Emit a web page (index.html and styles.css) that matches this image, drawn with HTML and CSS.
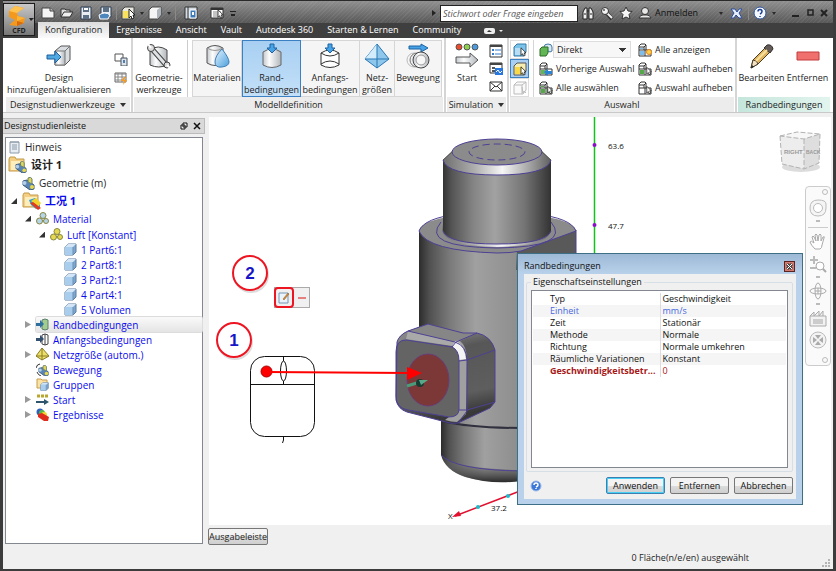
FILE: index.html
```
<!DOCTYPE html>
<html lang="de">

<head>
    <meta charset="UTF-8">
    <meta name="viewport" content="width=device-width, initial-scale=1.0">
    <title>CFD - Randbedingungen</title>
    <link rel="stylesheet" href="styles.css">
</head>

<body>
    <!-- shared icon shapes -->
    <svg class="sprite" width="0" height="0" aria-hidden="true">
        <defs>
            <linearGradient id="metal" x1="0" x2="1">
                <stop offset="0" stop-color="#c4c8cc" />
                <stop offset=".35" stop-color="#fdfdfd" />
                <stop offset="1" stop-color="#b2b7bc" />
            </linearGradient>
            <linearGradient id="sky" x1="0" x2="1" y2="1">
                <stop offset="0" stop-color="#e8f6ff" />
                <stop offset="1" stop-color="#4a9fdc" />
            </linearGradient>
        </defs>
        <symbol id="cube" viewBox="0 0 13 13">
            <path d="M1 4 4 1h8v8l-3 3H1z" fill="#7da7d2" stroke="#5c7d9f" />
            <path d="M1 4h8v8H1z" fill="#a9cdec" />
            <path d="M1 4 4 1h8L9 4z" fill="#d4e6f5" />
            <path d="M9 4v8" stroke="#6c8fb2" />
        </symbol>
        <symbol id="cursor" viewBox="0 0 8 12">
            <path d="M1 1v9l2-2 1 3 2-1-1-3h2z" fill="#fff" stroke="#222" />
        </symbol>
        <symbol id="stack" viewBox="0 0 14 14">
            <path d="M1 7V3l2-2h4l1 1v5" fill="#fff" stroke="#333" />
            <path d="M1 7h12v6H1zM7 7v6M1 4h5l2-2M6 4v3" fill="#fff" stroke="#333" />
        </symbol>
        <symbol id="balls" viewBox="0 0 13 13">
            <path d="M4 8 7 4l3 5z" stroke="#777" fill="none" />
            <circle cx="7" cy="3.500" r="3" stroke="#8a8640" />
            <circle cx="3.500" cy="9" r="3" stroke="#8a8640" />
            <circle cx="10" cy="9" r="2.500" stroke="#8a8640" />
        </symbol>
        <symbol id="folder" viewBox="0 0 20 18">
            <path d="M1 15V3l1-2h5l1 2h8v12z" fill="#f5cf83" stroke="#c39a4a" />
            <path d="M3 5h12v9H3z" fill="#fdeebd" />
        </symbol>
        <symbol id="pipe" viewBox="0 0 13 13">
            <path d="m1 4 4-1 7 5v4l-4 1-7-5z" fill="#5b86b4" stroke="#38587a" />
            <path d="M6 1q3-2 4 1v5L6 5z" fill="#e0d75a" stroke="#67806e" />
            <circle cx="2.500" cy="6" r="2" fill="#b3cfe8" />
            <circle cx="10" cy="10" r="2" fill="#e8d94b" />
        </symbol>
    </svg>

    <div class="window">
        <header class="header">
            <button class="app-button" aria-label="CFD Menü">
                <svg width="30" height="22" viewBox="0 0 30 22">
                    <path d="m5 6 6-5 9 2-7 5 1 3 7 2-1 5-7 3-8-1 6-5-6-3z" fill="#f39a1e" />
                    <path d="m11 1 9 2-7 5-8-2z" fill="#ffc352" />
                    <path d="m13 11 8 2-8 3z" fill="#ffb436" />
                    <path d="m13 16 7 2-7 3z" fill="#d86b0f" />
                    <path d="M25 13h5l-3 3z" fill="#222" />
                </svg>
                <span>CFD</span>
            </button>

            <div class="titlebar">
                <div class="quick">
                    <button aria-label="Neu"><svg width="14" height="12"><path d="M1 1h8l4 3v7H1z" fill="#f4f4f4" stroke="#444" /><path d="M9 1v3h4" fill="#bbb" stroke="#444" /></svg></button>
                    <button aria-label="Öffnen"><svg width="14" height="12"><path d="M1 10V2h4l1 1h4v2" fill="#ddd" stroke="#333" /><path d="M1 10 4 5h9l-3 5z" fill="#eee" stroke="#333" /></svg></button>
                    <button aria-label="Speichern"><svg width="14" height="14"><path d="M2 1h10v12H2z" fill="#e8edf2" stroke="#2e3c4e" /><path d="M4 1h6v5H4zM4 9h6v4H4z" fill="#5c7085" /><path d="M5 2h4v2H5z" fill="#fff" /></svg></button>
                    <button aria-label="Speichern unter"><svg width="14" height="14"><path d="M3 1h10v10H3z" fill="#e8edf2" stroke="#2e3c4e" /><path d="M5 1h6v5H5z" fill="#5c7085" /><path d="M1 9q6-4 11 0l-2 4H2z" fill="#4c86bd" stroke="#fff" /></svg></button>
                    <i class="split"></i>
                    <button class="with-arrow" aria-label="Auswahl"><svg width="14" height="14"><path d="M1 4 4 1h9v8l-3 4H1z" fill="#e9e9df" stroke="#444" /><path d="M2 5h6v7H2z" fill="#fbe25b" /><use href="#cursor" x="7" y="2" width="8" height="12" /></svg></button>
                    <button class="with-arrow" aria-label="Darstellung"><svg width="14" height="14"><path d="M1 4 4 1h9v8l-3 4H1z" fill="#f5f5f5" stroke="#444" /><path d="M9 4v9l4-4V1z" fill="#aeb4ba" /></svg></button>
                    <i class="split"></i>
                    <button class="wide" aria-label="Designstudienleiste"><svg width="14" height="14"><path d="M1 1h12v12H1z" fill="#d5dce3" stroke="#333" /><path d="M4 1v12" stroke="#333" /><path d="M6 4h6v8H6z" fill="#3d7bb8" stroke="#fff" /><path d="M8 6h2v3H8z" fill="#fff" /></svg></button>
                    <button class="wide" aria-label="Tabelle"><svg width="14" height="14"><path d="M1 2h12v10H1z" fill="#fff" stroke="#333" /><path d="M1 3h12" stroke="#333" stroke-width="2" /><path d="M3 6h8M3 8h8M3 10h8" stroke="#888" /><use href="#cursor" x="7" y="3" width="7" height="10" /></svg></button>
                    <i class="more"></i>
                </div>

                <div class="search">
                    <i class="play"></i>
                    <input type="text" placeholder="Stichwort oder Frage eingeben" aria-label="Suche">
                </div>

                <div class="account">
                    <button aria-label="Suchen"><svg width="14" height="14"><path d="M2 13V6l2-4h2v11zM8 13V2h2l2 4v7zM6 5h2" fill="#eee" stroke="#222" /><path d="M3 8h2M9 8h2" stroke="#222" /></svg></button>
                    <button aria-label="Schlüssel"><svg width="14" height="14"><path d="m6 6 6 7" stroke="#333" stroke-width="4" /><path d="m6 6 6 6" stroke="#f3f3f3" stroke-width="2" /><circle cx="5" cy="5" r="3.500" fill="#f3f3f3" stroke="#333" /><circle cx="4" cy="4" r="1" fill="#555" /></svg></button>
                    <button aria-label="Favoriten"><svg width="14" height="14"><path d="m7 1 2 4 4 .5-3 3 1 4.500L7 11l-4 2 1-4.500-3-3L5 5z" fill="#f5f5f5" stroke="#333" /></svg></button>
                    <button class="signin"><svg width="14" height="14"><circle cx="7" cy="5" r="3.500" fill="#e8e8e8" stroke="#333" /><path d="M1 12q1-3 4-3h4q3 0 4 3z" fill="#e8e8e8" stroke="#333" /></svg>Anmelden</button>
                    <button class="exchange" aria-label="Exchange"><svg width="13" height="13"><path d="M1 2h4l2 3 2-3h3L9 6l3 5H9L6 8l-2 3H1l3-5z" fill="#e7eefb" stroke="#2c4f9c" /></svg></button>
                    <i class="split"></i>
                    <button class="with-arrow" aria-label="Hilfe"><svg width="14" height="14"><circle cx="7" cy="7" r="6" fill="#f4f7fd" stroke="#2f549e" /><path d="M5 5.500Q5 3.500 7 3.500t2 2Q9 7 7 8M7 10v1" fill="none" stroke="#1c3f94" stroke-width="1.500" /></svg></button>
                </div>

                <div class="controls">
                    <button aria-label="Minimieren"><svg width="10" height="10"><path d="M1 8h7" stroke="#222" stroke-width="2" /></svg></button>
                    <button aria-label="Maximieren"><svg width="10" height="10"><path d="M3 2h5v5H3z" fill="none" stroke="#222" stroke-width="1.500" /></svg></button>
                    <button aria-label="Schließen"><svg width="10" height="10"><path d="m2 2 6 6M8 2 2 8" stroke="#222" stroke-width="2" /></svg></button>
                </div>
            </div>

            <nav class="tabs">
                <a href="#" class="active">Konfiguration</a>
                <a href="#">Ergebnisse</a>
                <a href="#">Ansicht</a>
                <a href="#">Vault</a>
                <a href="#">Autodesk 360</a>
                <a href="#">Starten &amp; Lernen</a>
                <a href="#">Community</a>
                <button class="collapse" aria-label="Multifunktionsleiste"><svg width="20" height="8"><rect x="1" y="1" width="11" height="6" rx="2" fill="#eee" /><path d="m4 5 2-2 3 2z" fill="#333" /><path d="M16 3h4l-2 2z" fill="#eee" /></svg></button>
            </nav>
        </header>

        <div class="ribbon">
            <section class="group group-design">
                <div class="tools">
                    <button class="tool tool-design">
                        <svg width="26" height="26" viewBox="0 0 26 26"><path d="m9 8 6-5h9v14l-5 5H9z" fill="#d9dde1" stroke="#555" /><path d="M9 8h10v14H9z" fill="url(#metal)" stroke="#777" /><path d="m19 8 5-5" stroke="#777" /><path d="M1 12h8V8l6 6-6 6v-4H1z" fill="#4fa8e0" stroke="#1d5f9e" /></svg>
                        <span>Design<br>hinzufügen/aktualisieren</span>
                    </button>
                    <div class="small-tools">
                        <button aria-label="Teil"><svg width="14" height="14"><path d="M1 2h8v7H1z" fill="#fff" stroke="#555" /><path d="M7 6h6v8H7z" fill="#dce3ea" stroke="#46535f" /><path d="M9 8h2v3H9z" fill="#4e7faf" /></svg></button>
                        <button aria-label="Tabelle"><svg width="14" height="14"><path d="M1 2h11v9H1z" fill="#fff" stroke="#666" /><path d="M1 3h11M1 6h11M1 9h11M4 2v9M8 2v9" stroke="#888" /><path d="m10 6-3 4h3l-1 4 4-5h-3l2-3z" fill="#f49c23" /></svg></button>
                    </div>
                </div>
                <div class="caption">Designstudienwerkzeuge <i class="arrow"></i></div>
            </section>

            <section class="group group-model">
                <div class="tools">
                    <button class="tool tool-geometry">
                        <svg width="26" height="26" viewBox="0 0 26 26"><path d="M4 7q8-6 17 0v15q-8 4-17 0z" fill="url(#metal)" stroke="#444" /><path d="m6 6 14 16" stroke="#444" stroke-width="5" /><path d="m6 6 14 16" stroke="#dfe2e5" stroke-width="3" /><circle cx="5" cy="5" r="3.500" fill="#ddd" stroke="#444" /><circle cx="21" cy="22" r="3" fill="#ddd" stroke="#444" /><path d="m2 1 3 4M24 25l-3-3" stroke="#fff" stroke-width="2" /></svg>
                        <span>Geometrie-<br>werkzeuge</span>
                    </button>
                    <div class="gallery">
                        <button class="tool tool-material">
                            <svg width="26" height="26" viewBox="0 0 26 26"><path d="M3 5q8-5 16 0v15q-8 5-16 0z" fill="url(#metal)" stroke="#555" /><path d="M3 5q8 5 16 0" fill="none" stroke="#999" /><path d="M18 6q7 9 7 13t-7 5-7-5 7-13z" fill="url(#sky)" stroke="#3f7fb8" /></svg>
                            <span>Materialien</span>
                        </button>
                        <button class="tool tool-boundary selected">
                            <svg width="26" height="26" viewBox="0 0 26 26"><path d="M4 9q9-6 18 0v13q-9 5-18 0z" fill="url(#metal)" stroke="#666" /><path d="M11 1h4v4h3l-5 5-5-5h3z" fill="#47a3e5" stroke="#1c62a5" /></svg>
                            <span>Rand-<br>bedingungen</span>
                        </button>
                        <button class="tool tool-initial">
                            <svg width="26" height="26" viewBox="0 0 26 26"><path d="M4 10q9-6 18 0v12q-9 5-18 0z" fill="#fff" stroke="#333" /><path d="M4 10q9 6 18 0M4 21q9-6 18 0" fill="none" stroke="#333" /><path d="M11 1h4v4h3l-5 5-5-5h3z" fill="#47a3e5" stroke="#1c62a5" /></svg>
                            <span>Anfangs-<br>bedingungen</span>
                        </button>
                        <button class="tool tool-mesh">
                            <svg width="26" height="26" viewBox="0 0 26 26"><path d="M13 1 25 16l-12 9L1 16z" fill="#8ec6ec" stroke="#2977b4" /><path d="M13 1 1 16h12z" fill="#d3ecfb" /><path d="M13 1v24M1 16h24" stroke="#2977b4" /></svg>
                            <span>Netz-<br>größen</span>
                        </button>
                        <button class="tool tool-motion">
                            <svg width="26" height="26" viewBox="0 0 26 26"><path d="M4 3h12V1l7 4-7 4V6H4z" fill="#47a3e5" stroke="#1c62a5" /><circle cx="9" cy="17" r="7" fill="none" stroke="#bbb" /><circle cx="12" cy="17" r="7" fill="#eee" stroke="#777" /><circle cx="16" cy="17" r="8" fill="url(#metal)" stroke="#444" /><circle cx="16" cy="17" r="5" fill="#f7f7f7" stroke="#999" /></svg>
                            <span>Bewegung</span>
                        </button>
                    </div>
                </div>
                <div class="caption">Modelldefinition</div>
            </section>

            <section class="group group-simulation">
                <div class="tools">
                    <button class="tool tool-start">
                        <svg width="26" height="26" viewBox="0 0 26 26"><circle cx="5" cy="4" r="3" fill="#ef4b2b" stroke="#555" /><circle cx="13" cy="4" r="3" fill="#8fd14a" stroke="#555" /><circle cx="21" cy="4" r="3" fill="#4a9ae0" stroke="#555" /><path d="M2 14h14v-4l8 7-8 7v-4H2z" fill="url(#metal)" stroke="#555" /></svg>
                        <span>Start</span>
                    </button>
                    <div class="small-tools">
                        <button aria-label="Optionen"><svg width="14" height="14"><path d="M1 1h12v12H1z" fill="#fff" stroke="#333" /><path d="M1 2h12" stroke="#444" stroke-width="2" /><path d="M3 6h2M3 10h2" stroke="#2e7bd0" stroke-width="2" /><path d="M6 6h6M6 10h6" stroke="#2e7bd0" /></svg></button>
                        <button aria-label="Monitor"><svg width="14" height="14"><path d="M1 1h12v10H1z" fill="#fff" stroke="#333" /><path d="M1 2h12" stroke="#444" stroke-width="2" /><path d="M3 6h3M3 9h3" stroke="#555" stroke-width="2" /><path d="M6 6h8v7H6z" fill="#2777e0" /><path d="m7 10 2-2 2 3 2-2" fill="none" stroke="#fff" /></svg></button>
                        <button aria-label="Nachricht"><svg width="14" height="14"><path d="M1 3h12v9H1z" fill="#fff" stroke="#333" /><path d="m1 3 6 5 6-5M1 12l5-5M13 12 8 7" fill="none" stroke="#333" /></svg></button>
                    </div>
                </div>
                <div class="caption">Simulation <i class="arrow"></i></div>
            </section>

            <section class="group group-select">
                <div class="tools">
                    <div class="modes">
                        <button aria-label="Volumen"><svg width="14" height="14"><path d="M1 4 4 1h9v8l-3 4H1z" fill="#7cc3ea" stroke="#337aa8" /><path d="M2 5h7v7H2z" fill="#b7def4" /><use href="#cursor" x="7" y="4" width="7" height="10" /></svg></button>
                        <button class="on" aria-label="Fläche"><svg width="14" height="14"><path d="M1 4 4 1h9v8l-3 4H1z" fill="#f6edb0" stroke="#555" /><path d="M2 5h7v7H2z" fill="#f9da46" /><use href="#cursor" x="7" y="4" width="7" height="10" /></svg></button>
                        <button disabled aria-label="Kante"><svg width="14" height="14"><path d="M1 4 4 1h9v8l-3 4H1zM1 4h8v9M9 4l4-3" fill="#fafafa" stroke="#bbb" /><path d="m9 6 1 6 1-2 2 2" fill="none" stroke="#bbb" /></svg></button>
                    </div>
                    <div class="choices">
                        <div class="choice">
                            <svg width="14" height="14"><path d="M5 4q0-3 4-3t4 3v4q-2 2-4 0H5z" fill="#d9e8f5" stroke="#4377a0" /><path d="M1 6 3 4h6v6l-2 3H1z" fill="#62b655" stroke="#2c6c28" /></svg>
                            <select aria-label="Auswahlmodus">
                                <option>Direkt</option>
                            </select>
                        </div>
                        <button class="choice"><svg width="14" height="14"><use href="#stack" width="14" height="14" /><path d="M2 8h4v4H2z" fill="#62b655" /><path d="m5 10 4-3v2h4v3H9v2z" fill="#2b83d3" /></svg>Vorherige Auswahl</button>
                        <button class="choice"><svg width="14" height="14"><use href="#stack" width="14" height="14" /><path d="M2 8h4v4H2zM2 5h3v1H2zM8 8h4v4H8z" fill="#55a84a" /><use href="#cursor" x="8" y="4" width="6" height="10" /></svg>Alle auswählen</button>
                    </div>
                    <div class="choices">
                        <button class="choice"><svg width="14" height="14"><use href="#stack" width="14" height="14" /><path d="M2 5h3v1H2zM2 8h4v4H2z" fill="#7fbdeb" /><circle cx="11" cy="9" r="2.500" fill="#ffd24a" stroke="#e3861c" /></svg>Alle anzeigen</button>
                        <button class="choice"><svg width="14" height="14"><use href="#stack" width="14" height="14" /><path d="M2 8h4v4H2z" fill="#55a84a" /><use href="#cursor" x="8" y="4" width="6" height="10" /></svg>Auswahl aufheben</button>
                        <button class="choice"><svg width="14" height="14"><use href="#stack" width="14" height="14" /><use href="#cursor" x="8" y="4" width="6" height="10" /></svg>Auswahl aufheben</button>
                    </div>
                </div>
                <div class="caption">Auswahl</div>
            </section>

            <section class="group group-context">
                <div class="tools">
                    <button class="tool tool-edit">
                        <svg width="26" height="26" viewBox="0 0 26 26"><path d="m2 25 2-8L18 3l5 4L9 21z" fill="#e2b45c" stroke="#4a3c28" /><path d="M4 17q4 0 5 4l-7 4z" fill="#f4e3c3" stroke="#4a3c28" /><path d="m15 5 3-3q5-1 6 4l-3 4z" fill="#655b58" stroke="#333" /><path d="m2 25 1-3 2 2z" fill="#222" /><path d="m7 18 11-11" stroke="#f7dfa0" stroke-width="2" /></svg>
                        <span>Bearbeiten</span>
                    </button>
                    <button class="tool tool-remove">
                        <svg width="26" height="26" viewBox="0 0 26 26"><path d="M2 9h22v8H2z" fill="#f0706e" stroke="#c43c3c" /></svg>
                        <span>Entfernen</span>
                    </button>
                </div>
                <div class="caption">Randbedingungen</div>
            </section>
        </div>

        <main class="main">
            <aside class="sidebar">
                <div class="dock-title">
                    <span>Designstudienleiste</span>
                    <button aria-label="Lösen"><svg width="8" height="8"><path d="M3 1h4v4H3zM1 3h4v4H1z" fill="#f0f0f0" stroke="#111" /></svg></button>
                    <button aria-label="Schließen"><svg width="8" height="8"><path d="m1 1 6 6M7 1 1 7" stroke="#111" stroke-width="1.500" /></svg></button>
                </div>
                <ul class="tree">
                    <li>
                        <div class="node tall dark"><svg width="13" height="14"><path d="M2 2h9v11H2z" fill="#e7edf3" stroke="#8c9aa8" /><path d="M2 2h9M4 5h5M4 7h5M4 9h5" stroke="#8c9aa8" /></svg>Hinweis</div>
                    </li>
                    <li>
                        <div class="node tall cjk dark"><svg width="20" height="18"><use href="#folder" width="20" height="18" /><use href="#pipe" x="7" y="5" width="12" height="12" /></svg>设计 1</div>
                        <ul>
                            <li>
                                <div class="node tall dark"><svg width="13" height="13"><use href="#pipe" width="13" height="13" /></svg>Geometrie (m)</div>
                            </li>
                            <li>
                                <div class="node tall cjk"><button class="twisty open" aria-label="Zuklappen"></button><svg width="20" height="18"><use href="#folder" width="20" height="18" /><path d="m7 8 6-2 5 5v4l-4 2-5-4z" fill="#2f9fd6" /><path d="m9 9 5-3 5 5-3 4z" fill="#f2d32d" /><path d="m8 11 3-1 8 6-3 2z" fill="#e03a22" /></svg>工况 1</div>
                                <ul>
                                    <li>
                                        <div class="node medium"><button class="twisty open" aria-label="Zuklappen"></button><svg class="balls-blue" width="13" height="13"><use href="#balls" width="13" height="13" /></svg>Material</div>
                                        <ul>
                                            <li>
                                                <div class="node"><button class="twisty open" aria-label="Zuklappen"></button><svg class="balls-yellow" width="13" height="13"><use href="#balls" width="13" height="13" /></svg>Luft [Konstant]</div>
                                                <ul>
                                                    <li><div class="node"><svg width="13" height="13"><use href="#cube" width="13" height="13" /></svg>1 Part6:1</div></li>
                                                    <li><div class="node"><svg width="13" height="13"><use href="#cube" width="13" height="13" /></svg>2 Part8:1</div></li>
                                                    <li><div class="node"><svg width="13" height="13"><use href="#cube" width="13" height="13" /></svg>3 Part2:1</div></li>
                                                    <li><div class="node"><svg width="13" height="13"><use href="#cube" width="13" height="13" /></svg>4 Part4:1</div></li>
                                                    <li><div class="node"><svg width="13" height="13"><use href="#cube" width="13" height="13" /></svg>5 Volumen</div></li>
                                                </ul>
                                            </li>
                                        </ul>
                                    </li>
                                    <li>
                                        <div class="node current"><button class="twisty" aria-label="Aufklappen"></button><svg width="13" height="13"><path d="M6 2q3-2 6 0v9q-3 2-6 0z" fill="#a3cd8f" stroke="#5c7f6e" /><path d="M0 5h4V2l4 4-4 4V8H0z" fill="#2f6f9e" /></svg>Randbedingungen</div>
                                    </li>
                                    <li>
                                        <div class="node"><svg width="13" height="13"><path d="M6 2q3-2 6 0v9q-3 2-6 0zM9 1v11" fill="#fff" stroke="#444" /><path d="M0 5h4V2l4 4-4 4V8H0z" fill="#34506e" /></svg>Anfangsbedingungen</div>
                                    </li>
                                    <li>
                                        <div class="node"><button class="twisty" aria-label="Aufklappen"></button><svg width="13" height="13"><path d="m6 0 7 8-7 4-6-4z" fill="#ece06a" stroke="#8a7c22" /><path d="M6 0v12M0 8h13" stroke="#8a7c22" /></svg>Netzgröße (autom.)</div>
                                    </li>
                                    <li>
                                        <div class="node"><svg width="13" height="13"><use href="#pipe" x="2" y="2" width="11" height="11" /><path d="M0 5q1-4 4-4M1 9q1 3 4 4" fill="none" stroke="#333" /></svg>Bewegung</div>
                                    </li>
                                    <li>
                                        <div class="node"><svg width="13" height="13"><path d="M1 10V1h4l1 1h5v8z" fill="#fae3a1" stroke="#c89c50" /><use href="#cube" x="4" y="4" width="9" height="9" /></svg>Gruppen</div>
                                    </li>
                                    <li>
                                        <div class="node"><button class="twisty" aria-label="Aufklappen"></button><svg width="13" height="13"><path d="M1 3h3M5 3h3M9 3h3" stroke="#b9a62c" stroke-width="3" /><path d="M0 8h8V6l5 3-5 3v-2H0z" fill="#2d566e" /></svg>Start</div>
                                    </li>
                                    <li>
                                        <div class="node"><button class="twisty" aria-label="Aufklappen"></button><svg width="13" height="13"><circle cx="4" cy="4" r="3.500" fill="#2d62c4" /><circle cx="6" cy="5" r="3" fill="#5cb546" /><circle cx="8" cy="7" r="3" fill="#f0d72b" /><path d="m2 6 4-1 7 4-1 4-4 0-6-4z" fill="#df2d1d" /></svg>Ergebnisse</div>
                                    </li>
                                </ul>
                            </li>
                        </ul>
                    </li>
                </ul>
            </aside>

            <div class="workspace">
                <div class="viewport">
                    <svg class="scene" viewBox="209 117 622 408" preserveAspectRatio="xMinYMin meet">
                        <defs>
                            <linearGradient id="shaft" x1="0" x2="1">
                                <stop offset="0" stop-color="#333" />
                                <stop offset=".08" stop-color="#545454" />
                                <stop offset=".28" stop-color="#848484" />
                                <stop offset=".48" stop-color="#a2a2a2" />
                                <stop offset=".75" stop-color="#757575" />
                                <stop offset="1" stop-color="#333" />
                            </linearGradient>
                            <linearGradient id="body" x1="0" x2="1">
                                <stop offset="0" stop-color="#2c2c2c" />
                                <stop offset=".1" stop-color="#505050" />
                                <stop offset=".3" stop-color="#7a7a7a" />
                                <stop offset=".55" stop-color="#a0a0a0" />
                                <stop offset="1" stop-color="#8c8c8c" />
                            </linearGradient>
                            <linearGradient id="bevel" x1="0" x2="1">
                                <stop offset="0" stop-color="#6e6e6e" />
                                <stop offset=".3" stop-color="#b0b0b0" />
                                <stop offset=".55" stop-color="#f6f6f6" />
                                <stop offset=".8" stop-color="#a4a4a4" />
                                <stop offset="1" stop-color="#606060" />
                            </linearGradient>
                            <linearGradient id="side" x1="0" y1="0" x2=".2" y2="1">
                                <stop offset="0" stop-color="#9a9a9a" />
                                <stop offset=".2" stop-color="#7a7a7a" />
                                <stop offset=".35" stop-color="#575757" />
                                <stop offset=".8" stop-color="#5e5e5e" />
                                <stop offset="1" stop-color="#383838" />
                            </linearGradient>
                            <linearGradient id="foot" x1="0" x2="0" y1="0" y2="1">
                                <stop offset="0" stop-color="#8a8a8a" stop-opacity="0" />
                                <stop offset="1" stop-color="#282828" />
                            </linearGradient>
                        </defs>

                        <!-- lower stub -->
                        <path d="M441 415v40q4 15 24 22 25 7 55 4v-66z" fill="url(#body)" />
                        <path d="M441 455q14 14 80 15v11q-30 4-55-4-21-7-25-22z" fill="url(#foot)" />
                        <path class="edge" d="M441 455q14 15 80 16" />

                        <!-- housing -->
                        <path d="M419 231v165l23 25q20 7 55 7h25V250z" fill="url(#body)" />
                        <path d="M517 250 576 230v40h-60z" fill="#595959" />
                        <path d="M419 231q3-16 78-18 76 2 79 18l-55 20q-10 2-24 2-70-2-78-22z" fill="#8b8b8b" />
                        <path class="edge" d="M419 231q5-13 40-17M535 214q36 4 41 17l-55 20q-10 2-24 2-70-2-78-22M576 230v28" />
                        <path d="M442 230q2 16 55 17 53-1 54-17l-4-6H443z" fill="url(#bevel)" />
                        <path class="edge" d="M441 222q-21 25 56 26 75-1 54-26" />
                        <path d="M442 421q28 7 80 7" fill="none" stroke="#30303e" stroke-width="2" />

                        <!-- shaft -->
                        <path d="M443 160v71q5 13 54 13t54-13v-71z" fill="url(#shaft)" />
                        <path class="edge" d="M443 231q5 13 54 13t54-13" />
                        <path d="m452 151-9 9q4 15 54 15t54-15l-9-9z" fill="url(#bevel)" />
                        <path class="edge" d="M443 160q4 15 54 15t54-15" />
                        <ellipse cx="497" cy="152" rx="45" ry="13" fill="#8b8b8b" />
                        <ellipse class="edge" cx="497" cy="152" rx="45" ry="13" />
                        <path d="m452 152-9 8M542 152l9 8" stroke="#555" />
                        <ellipse class="edge dashed" cx="497" cy="152" rx="28" ry="8" />

                        <!-- side port -->
                        <path d="M397 342q2-7 11-11l20-7 35 9h14q14 3 18 17v52l-5 6-32 15q-8 1-12-1l-39-10q-9-3-11-12z" fill="url(#side)" />
                        <path d="M397 342q2-7 11-11l20-7 35 9h14L452 345l-47-7z" fill="#868686" />
                        <path d="m452 342 7-2q8 6 8 20l-1 54-9 8q-6 0-12-2l13-10z" fill="#a0a0a0" />
                        <path d="m452 344 4-3q8 4 10 18l-7 1z" fill="#f4f4f4" />
                        <path d="m408 331 47 11-3 4-46-7z" fill="#a9a9a9" />
                        <path d="M396 352q0-12 10-12l46 7q7 3 7 14v48q0 8-10 8l-41-7q-12-2-12-14z" fill="#646464" />
                        <path class="edge" d="M397 342q2-7 11-11l20-7 35 9h14q14 3 18 17v52l-5 6-32 15q-8 1-12-1l-39-10q-9-3-11-12z" />
                        <path class="edge" d="M396 352q0-12 10-12l46 7q7 3 7 14v48q0 8-10 8l-41-7q-12-2-12-14zM408 331l47 11q12 4 12 19v50l-9 12M459 361l8-1 28-10M467 410l28-8M452 347l4-5 21-9M459 410h8" />
                        <ellipse cx="428" cy="380" rx="21" ry="26" fill="#7c3737" stroke="#693d78" />
                        <path d="m407 386 13-4" stroke="#4b9b7b" stroke-width="3" />
                        <circle cx="420" cy="383" r="4" fill="#173c31" />
                        <path d="m419 380 9 0-7 5z" fill="#57a98a" />

                        <!-- axes -->
                        <path d="M594.500 117v140" stroke="#12c21b" stroke-width="1.500" />
                        <circle cx="594.500" cy="145" r="2" fill="#8a10c8" />
                        <circle cx="594.500" cy="225" r="2" fill="#8a10c8" />
                        <text class="axis" x="608" y="149">63.6</text>
                        <text class="axis" x="608" y="229">47.7</text>
                        <path d="m520 491-65 25" stroke="#e0102e" stroke-width="1.500" />
                        <path d="m452 517 7-6 2 5z" fill="#e0102e" />
                        <circle cx="508" cy="496" r="2" fill="#19bccb" />
                        <circle cx="478" cy="507" r="2" fill="#19bccb" />
                        <text class="axis" x="491" y="511">37.2</text>
                        <text class="axis" x="448" y="519">X</text>

                        <!-- mouse with pointer to the picked face -->
                        <g fill="none" stroke="#111">
                            <rect x="250.500" y="356.500" width="64" height="80" rx="14" />
                            <path d="M250 384.500h65M283.500 356v28M283.500 436v4l-1 3" />
                            <ellipse cx="283.500" cy="371" rx="3" ry="10" fill="#fff" />
                        </g>
                        <circle cx="266.500" cy="371.500" r="5.500" fill="red" stroke="#a00" />
                        <path d="m267 372 142 1" stroke="red" stroke-width="2" />
                        <path d="m407 367 15 6-15 7z" fill="red" />

                        <!-- step numbers -->
                        <g class="steps">
                            <circle cx="251" cy="275" r="17" fill="none" stroke="#ddd" stroke-width="2" />
                            <circle cx="250" cy="273" r="17" fill="#fff" stroke="#ee1522" stroke-width="2" />
                            <circle cx="235" cy="342" r="17" fill="none" stroke="#ddd" stroke-width="2" />
                            <circle cx="234" cy="340" r="17" fill="#fff" stroke="#ee1522" stroke-width="2" />
                            <text x="250" y="279">2</text>
                            <text x="234" y="346">1</text>
                        </g>
                    </svg>

                    <div class="mini-toolbar">
                        <button class="marked" aria-label="Bearbeiten"><svg width="12" height="14"><path d="M1 2h9v10H1z" fill="#eaf2fa" stroke="#7796b8" /><path d="m5 8 5-6 1 1-5 6z" fill="#d68b35" stroke="#8b5a22" stroke-width=".5" /></svg></button>
                        <button aria-label="Entfernen"><svg width="8" height="4"><path d="M0 2h8" stroke="#e58080" stroke-width="2" /></svg></button>
                    </div>

                    <div class="view-cube">
                        <svg width="46" height="46">
                            <ellipse cx="24" cy="38" rx="19" ry="5" fill="#dcdcdc" />
                            <path d="m3 7 17-4 23 2-16 5z" fill="#f7f7f7" />
                            <path d="m3 7 24 3v30L5 35z" fill="#ededed" />
                            <path d="m27 10 16-5-1 29-15 6z" fill="#dedede" />
                            <path d="m3 7 17-4 23 2-16 5zM3 7l2 28 22 5 15-6 1-29M27 10v30" fill="none" stroke="#b2b2b2" stroke-dasharray="5 2" />
                            <text x="7" y="25">RIGHT</text>
                            <text class="back" x="29" y="25">BACK</text>
                        </svg>
                    </div>

                    <div class="nav-bar">
                        <button class="dot" aria-label="Schließen"><svg width="6" height="6"><circle cx="3" cy="3" r="2.500" fill="none" stroke="#bbb" /></svg></button>
                        <button class="drop" aria-label="SteeringWheel"><svg width="18" height="18"><path d="M9 1q8 0 8 4v4q0 8-8 8T1 9t8-8z" fill="#f5f5f5" stroke="#bbb" /><circle cx="9" cy="9" r="4.500" fill="#fff" stroke="#bbb" /></svg></button>
                        <hr>
                        <button aria-label="Pan"><svg width="18" height="18"><path d="M6 16Q2 12 1 9q1-2 4 1L3 4q1-2 2 0l2 4-1-6q1-2 2 0l1 6 1-6q1-2 2 0v6l2-4q2-1 1 1l-2 7q0 3-2 4z" fill="#fff" stroke="#aaa" /></svg></button>
                        <button class="drop" aria-label="Zoom"><svg width="18" height="18"><path d="M1 5h8M5 1v8M1 13h6" stroke="#bbb" stroke-width="2" /><circle cx="11" cy="11" r="4" fill="#fff" stroke="#aaa" /><path d="m14 14 3 3" stroke="#aaa" stroke-width="2" /></svg></button>
                        <button class="drop" aria-label="Orbit"><svg width="18" height="18"><ellipse cx="9" cy="9" rx="8" ry="3" fill="none" stroke="#aaa" /><ellipse cx="9" cy="9" rx="3" ry="8" fill="none" stroke="#aaa" /><path d="M9 6v6M6 9h6" stroke="#aaa" /></svg></button>
                        <button aria-label="Ansicht"><svg width="18" height="18"><path d="M1 7h16v10H1zM1 7l4-4v4l5-5v5l4-5v5" fill="#f2f2f2" stroke="#aaa" /><path d="M4 10h10v5H4z" fill="#ccc" /></svg></button>
                        <button aria-label="Zentrieren"><svg width="18" height="18"><circle cx="9" cy="9" r="8" fill="#f3f3f3" stroke="#bbb" /><path d="m9 8-3-4h6zM9 10l-3 4h6zM8 9 4 6v6zM10 9l4-3v6z" fill="#aaa" /></svg></button>
                        <button class="dot last" aria-label="Optionen"><svg width="6" height="6"><circle cx="3" cy="3" r="2.500" fill="none" stroke="#bbb" /></svg></button>
                    </div>

                    <div class="dialog" role="dialog" aria-labelledby="dialog-title">
                        <div class="dialog-title">
                            <span id="dialog-title">Randbedingungen</span>
                            <button class="close" aria-label="Schließen"><svg width="7" height="7"><path d="m1 1 5 5M6 1 1 6" stroke="#444" stroke-width="3" /><path d="m1 1 5 5M6 1 1 6" stroke="#fff" /></svg></button>
                        </div>
                        <div class="dialog-body">
                            <fieldset>
                                <legend>Eigenschaftseinstellungen</legend>
                                <div class="properties">
                                    <table>
                                        <tr><th scope="row">Typ</th><td>Geschwindigkeit</td></tr>
                                        <tr class="unit"><th scope="row">Einheit</th><td>mm/s</td></tr>
                                        <tr><th scope="row">Zeit</th><td>Stationär</td></tr>
                                        <tr><th scope="row">Methode</th><td>Normale</td></tr>
                                        <tr><th scope="row">Richtung</th><td>Normale umkehren</td></tr>
                                        <tr><th scope="row">Räumliche Variationen</th><td>Konstant</td></tr>
                                        <tr class="missing"><th scope="row">Geschwindigkeitsbetr...</th><td>0</td></tr>
                                    </table>
                                </div>
                            </fieldset>
                            <div class="dialog-actions">
                                <button class="help" aria-label="Hilfe"><svg width="12" height="12"><circle cx="6" cy="6" r="5" fill="#3c78d8" stroke="#9dbbe8" stroke-width="1" /><path d="M4 5q0-2 2-2t2 2q0 1-2 2M6 8v1" fill="none" stroke="#fff" stroke-width="1.500" /></svg></button>
                                <button class="push default">Anwenden</button>
                                <button class="push">Entfernen</button>
                                <button class="push">Abbrechen</button>
                            </div>
                        </div>
                    </div>
                </div>
                <button class="output-tab">Ausgabeleiste</button>
            </div>
        </main>

        <footer class="statusbar">
            <span>0 Fläche(n/e/en) ausgewählt</span>
            <svg class="grip" width="10" height="10"><path d="M7 1h2M4 4h2M7 4h2M1 7h2M4 7h2M7 7h2" stroke="#b5b5b5" stroke-width="2" /></svg>
        </footer>
    </div>
</body>

</html>
```
FILE: styles.css
```
* {
    box-sizing: border-box;
}

body {
    margin: 0;
    font-family: 'Open Sans', 'Noto Sans', 'Noto Sans CJK SC', sans-serif;
    font-size: 9px;
    line-height: 12px;
    color: #1e1e1e;
}

button {
    margin: 0;
    padding: 0;
    border: none;
    background: none;
    font: inherit;
    color: inherit;
    cursor: pointer;
}

svg {
    display: block;
    flex: none;
}

.sprite {
    position: absolute;
}

.window {
    display: flex;
    flex-direction: column;
    min-height: 100vh;
    border: 3px solid #3c3c3c;
    border-top: none;
    background-color: #f0f0f0;
}

/* title bar and tabs */

.header {
    display: grid;
    grid-template-columns: 32px 1fr;
    grid-template-rows: 23px 15px;
    background-color: #3f3f3f;
}

.app-button {
    z-index: 1;
    grid-row: 1 / 3;
    display: flex;
    flex-direction: column;
    align-items: center;
    margin: 3px 0 2px;
    padding-top: 1px;
    border: 1px solid #1c1c1c;
    background: linear-gradient(#c9c9c9, #777);
    font-size: 7px;
    font-weight: bold;
    line-height: 8px;
}

.titlebar {
    display: flex;
    align-items: center;
    margin-left: -32px;
    padding: 2px 4px 0 35px;
    background: repeating-linear-gradient(135deg, rgba(255, 255, 255, .06) 0 1px, transparent 1px 3px), linear-gradient(#8f8f8f, #585858);
    border-top: 1px solid #2a2a2a;
}

.quick,
.account,
.controls {
    display: flex;
    align-items: center;
}

.quick button,
.account button {
    display: flex;
    align-items: center;
    justify-content: center;
    width: 19px;
}

.split {
    width: 1px;
    height: 14px;
    margin: 0 2px;
    background-color: #8a8a8a;
}

.quick .wide {
    width: 26px;
}

.quick .with-arrow,
.account .with-arrow {
    width: 27px;
    gap: 5px;
}

.with-arrow::after,
.exchange::before {
    content: '';
    border: 2px solid transparent;
    border-top: 3px solid #2a2a2a;
    border-bottom: none;
}

.more {
    width: 6px;
    height: 5px;
    border-top: 1px solid #222;
    background: linear-gradient(#222, #222) center bottom / 4px 2px no-repeat;
}

.search {
    display: flex;
    align-items: center;
    gap: 4px;
    margin-left: auto;
}

.play {
    border: 3px solid transparent;
    border-left: 4px solid #222;
    border-right: none;
}

.search input {
    width: 138px;
    height: 17px;
    padding: 0 2px;
    border: 1px solid #222;
    background-color: #fff;
    font: italic 9px 'Open Sans', sans-serif;
}

.search input::placeholder {
    color: #555;
}

.account .signin {
    width: auto;
    gap: 3px;
    padding-left: 3px;
    color: #111;
}

.account .exchange {
    width: 48px;
    gap: 7px;
    justify-content: flex-end;
    padding-right: 3px;
}

.controls {
    gap: 4px;
    margin-left: 13px;
}

.tabs {
    display: flex;
    padding-left: 3px;
    color: #fff;
    line-height: 14px;
}

.tabs a {
    padding: 0 7px;
    color: inherit;
    text-decoration: none;
}

.tabs .active {
    margin-top: -1px;
    padding-top: 1px;
    background: linear-gradient(#dcdcdc, #fafafa);
    color: #222;
}

.collapse {
    margin-left: 15px;
}

/* ribbon */

.ribbon {
    display: flex;
    height: 75px;
    padding: 0 2px;
    background-color: #fff;
    border-bottom: 1px solid #c9c9c9;
}

.group {
    display: flex;
    flex-direction: column;
    border-right: 2px solid #d5d5d5;
}

.tools {
    display: flex;
    flex: 1;
    padding: 2px 1px 0;
}

.caption {
    display: flex;
    align-items: center;
    justify-content: center;
    gap: 5px;
    height: 15px;
    margin: 0 1px;
    background-color: #ececec;
}

.arrow {
    border: 3px solid transparent;
    border-top: 4px solid #333;
    border-bottom: none;
}

.group-design {
    width: 128px;
}

.group-model {
    width: 313px;
}

.group-simulation {
    width: 63px;
}

.group-select {
    width: 228px;
}

.group-context {
    flex: 1;
    border-right: none;
}

.group-context .caption {
    background: linear-gradient(90deg, #c5e6dc, #e2f4ee);
}

.tool {
    display: flex;
    flex-direction: column;
    align-items: center;
    gap: 3px;
    height: 57px;
    padding-top: 2px;
    border: 1px solid transparent;
    white-space: nowrap;
}

.tool-design {
    width: 106px;
}

.tool-geometry {
    width: 50px;
}

.small-tools {
    display: flex;
    flex-direction: column;
    justify-content: space-evenly;
    padding-left: 2px;
}

.group-design .small-tools {
    padding: 8px 0 8px 2px;
}

.gallery {
    display: flex;
    flex: 1;
    margin-left: 3px;
    padding-left: 4px;
    border-left: 1px solid #ccc;
}

.gallery .tool {
    border-color: #d6d6d6;
    border-left: none;
    background-color: #f5f5f5;
}

.gallery .tool-material {
    width: 50px;
    border-left: 1px solid #d6d6d6;
}

.gallery .tool-boundary,
.gallery .tool-initial {
    width: 59px;
}

.gallery .selected {
    border: 1px solid #3c80c4;
    background: linear-gradient(#a8cff2, #c3e0f8);
}

.gallery .tool-mesh {
    width: 35px;
}

.gallery .tool-motion {
    width: 47px;
}

.tool-start {
    width: 40px;
}

.modes {
    display: flex;
    flex-direction: column;
    padding-right: 4px;
    border-right: 1px solid #d5d5d5;
}

.modes button {
    width: 19px;
    height: 19px;
    padding: 1px 2px;
    border: 1px solid #ddd;
}

.modes .on {
    border-color: #3c80c4;
    background-color: #a8cff2;
}

.choices {
    display: flex;
    flex-direction: column;
    width: 99px;
    padding-left: 5px;
}

.choice {
    display: flex;
    align-items: center;
    gap: 3px;
    height: 19px;
    white-space: nowrap;
}

/* the arrow is built from two triangles */
.choice select {
    appearance: none;
    width: 78px;
    height: 17px;
    margin-left: -3px;
    padding: 0 3px;
    border: 1px solid #ddd;
    border-radius: 0;
    background:
        linear-gradient(45deg, transparent 50%, #333 50%) right 7px center / 4px 4px no-repeat,
        linear-gradient(-45deg, transparent 50%, #333 50%) right 3px center / 4px 4px no-repeat,
        #f7f7f7;
    background:
        linear-gradient(to top right, transparent 50%, #333 50%) right 7px center / 4px 4px no-repeat,
        linear-gradient(to bottom right, #333 50%, transparent 50%) right 3px center / 4px 4px no-repeat,
        #f7f7f7;
    color: inherit;
    font: inherit;
}

.tool-edit {
    width: 47px;
}

.tool-remove {
    width: 45px;
}

/* docked tree */

.main {
    display: flex;
    flex: 1;
    padding-top: 4px;
}

.sidebar {
    display: flex;
    flex-direction: column;
    width: 202px;
    margin-right: 4px;
    padding-top: 1px;
}

.dock-title {
    display: flex;
    align-items: center;
    gap: 5px;
    height: 16px;
    padding: 0 3px 0 1px;
    border: 1px solid #bbb;
    border-left: none;
    background-color: #d9d9d9;
    color: #111;
}

.dock-title span {
    flex: 1;
}

.tree {
    flex: 1;
    margin: 3px 2px 2px;
    padding: 0 0 0 2px;
    border: 1px solid #828790;
    background-color: #fff;
    color: #0a0aee;
    font-size: 10px;
    list-style: none;
}

.tree ul {
    margin: 0;
    padding: 0 0 0 14px;
    list-style: none;
}

.node {
    display: flex;
    align-items: center;
    gap: 4px;
    height: 15px;
}

.node.tall {
    height: 18px;
}

.node.medium {
    height: 17px;
}

.dark {
    color: #222;
}

.cjk {
    gap: 3px;
    font-size: 11px;
    font-weight: bold;
}

.current {
    border-radius: 2px;
    background: linear-gradient(#fafafa, #e4e4e4);
    box-shadow: 0 0 0 1px #dcdcdc;
}

.twisty {
    width: 6px;
    height: 7px;
    margin-left: -11px;
    margin-right: 1px;
    background-color: #999;
    clip-path: polygon(0 0, 100% 50%, 0 100%);
}

.cjk .twisty {
    margin-right: 2px;
}

.twisty.open {
    height: 6px;
    background-color: #333;
    clip-path: polygon(100% 0, 100% 100%, 0 100%);
}

.balls-blue {
    fill: #b5d4ea;
}

.balls-yellow {
    fill: #e3d84e;
}

/* 3D view */

.workspace {
    display: flex;
    flex: 1;
    flex-direction: column;
    align-items: flex-start;
}

.viewport {
    position: relative;
    align-self: stretch;
    flex: 1;
    margin-right: 2px;
    background-color: #fff;
    overflow: hidden;
}

.scene {
    width: 100%;
    height: 100%;
}

.edge {
    fill: none;
    stroke: #4c4194;
}

.dashed {
    stroke-dasharray: 7 4;
}

.axis {
    font-size: 8px;
    fill: #111;
}

.steps text {
    fill: #1616c8;
    font: bold 17px 'Liberation Sans', sans-serif;
    text-anchor: middle;
}

.mini-toolbar {
    position: absolute;
    left: 65px;
    top: 170px;
    display: flex;
    width: 36px;
    height: 21px;
    border: 1px solid #aaa;
    background-color: #f0f0f0;
}

.mini-toolbar button {
    display: flex;
    align-items: center;
    justify-content: center;
    width: 15px;
}

.mini-toolbar .marked {
    width: 21px;
    margin: -1px 0 -1px -1px;
    border: 2px solid #ee1522;
    border-radius: 4px;
}

.view-cube {
    position: absolute;
    top: 12px;
    right: 8px;
}

.view-cube text {
    fill: #999;
    font: bold 6px 'Liberation Sans', sans-serif;
}

.view-cube .back {
    font-size: 5px;
}

.nav-bar {
    position: absolute;
    top: 69px;
    right: 0;
    display: flex;
    flex-direction: column;
    align-items: center;
    gap: 4px;
    width: 26px;
    height: 180px;
    border: 1px solid #ccc;
    border-radius: 4px;
    background-color: #fafafa;
}

.nav-bar hr {
    width: 20px;
    margin: 1px 0;
    border: none;
    border-top: 1px solid #ccc;
}

.nav-bar .dot {
    align-self: flex-end;
    margin: 2px 2px 0 0;
}

.nav-bar .last {
    margin-top: auto;
    margin-bottom: 2px;
}

.drop::after {
    content: '';
    display: block;
    width: 4px;
    height: 2px;
    margin: 3px auto 0;
    background-color: #bbb;
}

/* dialog */

.dialog {
    position: absolute;
    top: 136px;
    right: 28px;
    width: 286px;
    padding: 0 6px 5px;
    border: 1px solid #3d6f86;
    background: linear-gradient(#9db9d6, #b9d1ea 20px);
    color: #111;
}

.dialog-title {
    display: flex;
    align-items: center;
    justify-content: space-between;
    height: 20px;
    padding-top: 4px;
}

.close {
    display: flex;
    align-items: center;
    justify-content: center;
    width: 11px;
    height: 11px;
    margin-right: 1px;
    border: 1px solid #5c2420;
    background-color: #d27b70;
}

.dialog-body {
    padding: 2px 3px 5px 2px;
    background-color: #f0f0f0;
}

fieldset {
    margin: 0;
    padding: 2px 4px 3px;
    border: 1px solid #d5dfe5;
    border-radius: 2px;
}

legend {
    padding: 0 2px;
}

.properties {
    height: 178px;
    padding: 2px 1px;
    border: 1px solid #828790;
    background-color: #fff;
}

table {
    width: 100%;
    border-collapse: collapse;
    table-layout: fixed;
}

th,
td {
    height: 12px;
    padding: 0;
    line-height: 12px;
    text-align: left;
    white-space: nowrap;
}

th {
    width: 127px;
    padding-left: 17px;
    border-right: 1px solid #ddd;
    font-weight: normal;
}

td {
    padding-left: 2px;
}

tr:nth-child(even) {
    background-color: #f5f5f5;
}

.unit {
    color: #4766e0;
}

.missing {
    color: #a81818;
}

.missing th {
    font-weight: bold;
}

.dialog-actions {
    display: flex;
    align-items: center;
    gap: 5px;
    padding-top: 5px;
}

.help {
    margin: 0 auto 0 4px;
}

.push {
    width: 59px;
    height: 17px;
    border: 1px solid #777;
    border-radius: 2px;
    background: linear-gradient(#f3f3f3 50%, #dcdcdc 50%, #cfcfcf);
}

.push.default {
    border-color: #3c7fb1;
    box-shadow: inset 0 0 0 1px #48d0f4;
}

/* bottom bars */

.output-tab {
    height: 17px;
    margin: 3px 0 1px -1px;
    padding: 0;
    border: 1px solid #777;
    border-radius: 2px;
    background: linear-gradient(#f3f3f3 50%, #dcdcdc 50%, #cfcfcf);
    white-space: nowrap;
}

.statusbar {
    display: flex;
    align-items: center;
    justify-content: flex-end;
    height: 23px;
    padding-right: 2px;
}

.statusbar span {
    margin-right: 72px;
}

.grip {
    align-self: flex-end;
}
```
